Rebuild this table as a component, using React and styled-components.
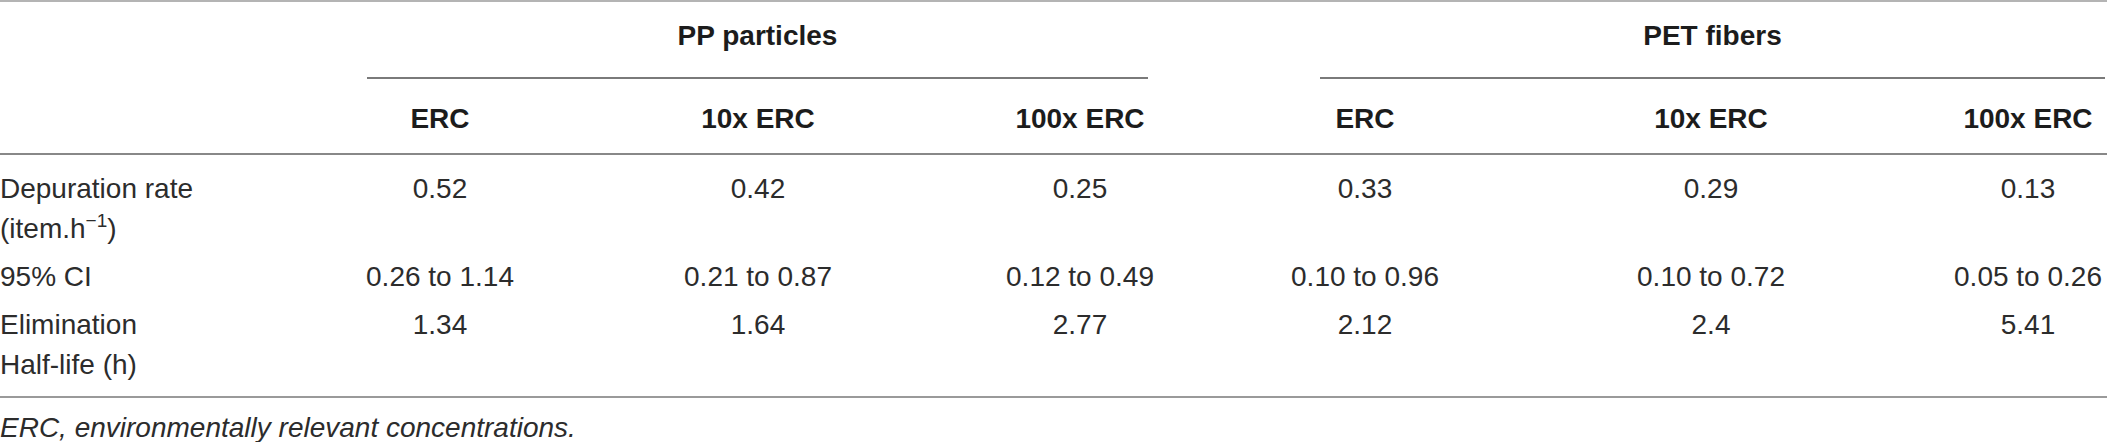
import React from 'react';
import styled, { createGlobalStyle } from 'styled-components';

const GlobalStyle = createGlobalStyle`
  html, body {
    margin: 0;
    padding: 0;
    background: #fff;
  }
  body {
    font-family: "Liberation Sans", Arial, sans-serif;
    color: #2c2c2c;
    overflow: hidden;
  }
`;

const COLUMNS = '280px 320px 316px 328px 242px 450px 184px';

const Wrapper = styled.div`
  width: 2107px;
  overflow: hidden;
`;

const Table = styled.div`
  border-top: 2px solid #b4b4b4;
`;

const Head = styled.div`
  display: grid;
  grid-template-columns: ${COLUMNS};
  border-bottom: 2px solid #888;
  font-weight: 700;
  font-size: 28px;
  line-height: 40px;
  color: #1c1c1c;
`;

const GroupCell = styled.div`
  grid-column: span 3;
  padding-top: 14px;
`;

const GroupTitle = styled.div`
  margin: 0 ${(p) => p.$right}px 0 ${(p) => p.$left}px;
  padding-bottom: 21px;
  border-bottom: 2px solid #7a7a7a;
  text-align: center;
`;

const SubHead = styled.div`
  padding: 20px 0 14px;
  text-align: center;
  white-space: nowrap;
`;

const Body = styled.div`
  display: grid;
  grid-template-columns: ${COLUMNS};
  padding: 10px 0 7px;
  border-bottom: 2px solid #9a9a9a;
  font-size: 28px;
  line-height: 40px;
`;

const Label = styled.div`
  padding: 4px 0;
  white-space: nowrap;
`;

const Value = styled.div`
  padding: 4px 0;
  text-align: center;
  white-space: nowrap;
`;

const Sup = styled.sup`
  font-size: 19px;
  line-height: 0;
  vertical-align: 11px;
`;

const Footnote = styled.p`
  margin: 10px 0 0;
  font-size: 28px;
  line-height: 40px;
  font-style: italic;
`;

const levels = ['ERC', '10x ERC', '100x ERC'];

const rows = [
  {
    label: (
      <>
        Depuration rate
        <br />
        (item.h<Sup>−1</Sup>)
      </>
    ),
    values: ['0.52', '0.42', '0.25', '0.33', '0.29', '0.13'],
  },
  {
    label: '95% CI',
    values: ['0.26 to 1.14', '0.21 to 0.87', '0.12 to 0.49', '0.10 to 0.96', '0.10 to 0.72', '0.05 to 0.26'],
  },
  {
    label: (
      <>
        Elimination
        <br />
        Half-life (h)
      </>
    ),
    values: ['1.34', '1.64', '2.77', '2.12', '2.4', '5.41'],
  },
];

export default function App() {
  return (
    <Wrapper>
      <GlobalStyle />
      <Table>
        <Head>
          <div />
          <GroupCell>
            <GroupTitle $left={87} $right={96}>PP particles</GroupTitle>
          </GroupCell>
          <GroupCell>
            <GroupTitle $left={76} $right={15}>PET fibers</GroupTitle>
          </GroupCell>
          <div />
          {[...levels, ...levels].map((l, i) => (
            <SubHead key={i}>{l}</SubHead>
          ))}
        </Head>
        <Body>
          {rows.map((r, i) => (
            <React.Fragment key={i}>
              <Label>{r.label}</Label>
              {r.values.map((v, j) => (
                <Value key={j}>{v}</Value>
              ))}
            </React.Fragment>
          ))}
        </Body>
      </Table>
      <Footnote>ERC, environmentally relevant concentrations.</Footnote>
    </Wrapper>
  );
}
